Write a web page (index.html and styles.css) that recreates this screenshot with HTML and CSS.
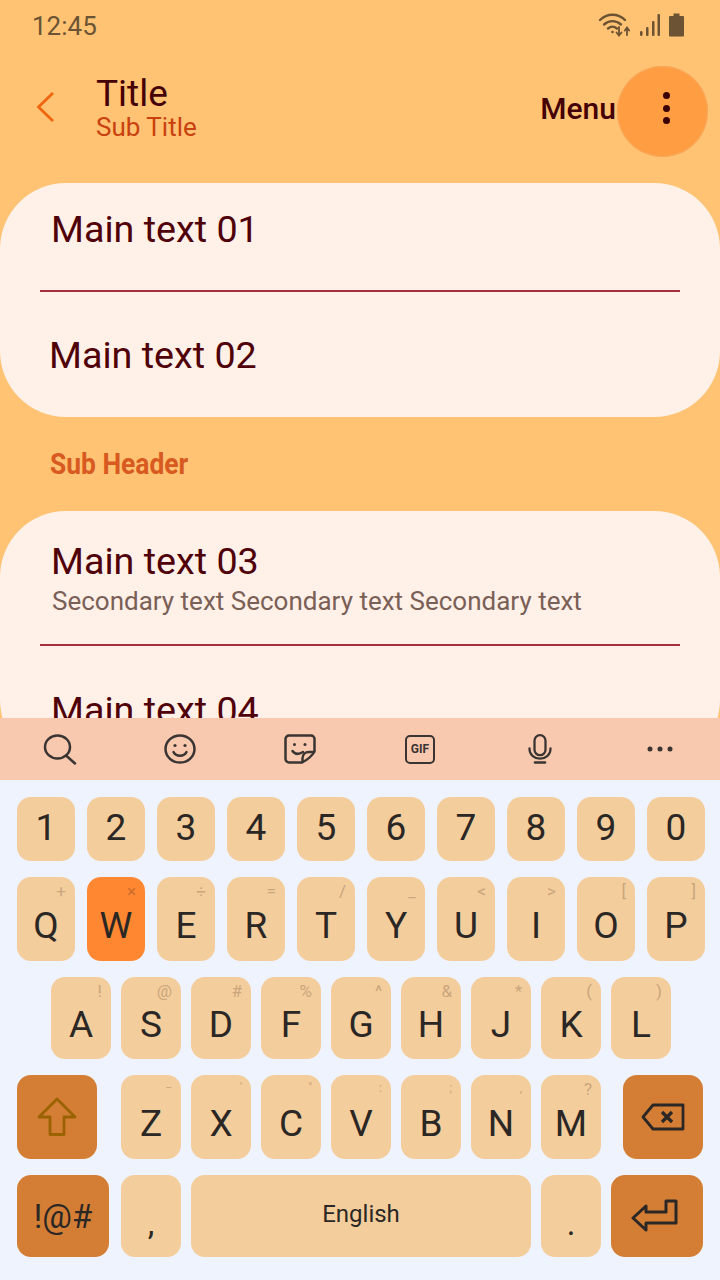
FILE: index.html
```html
<!DOCTYPE html>
<html lang="en">
<head>
  <meta charset="UTF-8">
  <title>Title</title>
  <meta name="viewport" content="width=device-width, initial-scale=1.0">
  <link rel="stylesheet" href="styles.css">
</head>
<body>
  <div class="screen">
    <div class="content">
      <div class="status-bar">
        <span class="clock">12:45</span>
        <div class="status-icons">
          <svg width="34" height="26" viewBox="0 0 34 26" fill="none" stroke="#6b5333" stroke-width="2.400" stroke-linecap="round">
            <path d="M2 8C9 1 20 1 27 8"/>
            <path d="M6 12.500C11 8 18 8 23 12.500"/>
            <path d="M10 16.500C13 14 16 14 19 16.500"/>
            <circle cx="14.500" cy="20" r="1.300" fill="#6b5333" stroke="none"/>
            <path d="M21 15V23M18.500 20.500L21 23.500L23.500 20.500" stroke-width="1.800"/>
            <path d="M29 23V16M26.800 18.500L29 15.500L31.200 18.500" stroke-width="1.800"/>
          </svg>
          <svg width="20" height="26" viewBox="0 0 20 26" fill="#6b5333">
            <rect x="0" y="19" width="2.500" height="5" rx="1.200"/>
            <rect x="6" y="15" width="2.500" height="9" rx="1"/>
            <rect x="12" y="9" width="2.500" height="15" rx="1"/>
            <rect x="17.500" y="2" width="2.500" height="22" rx="1"/>
          </svg>
          <svg width="17" height="26" viewBox="0 0 16 26" fill="#6b5333">
            <path d="M5 1.500H11V4H14.500A1 1 0 0 1 15.500 5V23.500A1 1 0 0 1 14.500 24.500H1.500A1 1 0 0 1 .5 23.500V5A1 1 0 0 1 1.500 4H5Z"/>
          </svg>
        </div>
      </div>

      <div class="app-bar">
        <svg class="back" width="20" height="32" viewBox="0 0 20 32" fill="none" stroke="#f0650f" stroke-width="2.800">
          <path d="M18 2L3.500 16L18 30"/>
        </svg>
        <div class="titles">
          <div class="title">Title</div>
          <div class="sub-title">Sub Title</div>
        </div>
        <span class="menu-label">Menu</span>
        <div class="more-btn">
          <span class="dot"></span>
          <span class="dot"></span>
          <span class="dot"></span>
        </div>
      </div>

      <div class="card">
        <div class="row row-01">
          <div class="main-text">Main text 01</div>
        </div>
        <div class="divider"></div>
        <div class="row row-02">
          <div class="main-text">Main text 02</div>
        </div>
      </div>

      <div class="sub-header"><span>Sub Header</span></div>

      <div class="card">
        <div class="row row-03">
          <div class="main-text">Main text 03</div>
          <div class="secondary-text">Secondary text Secondary text Secondary text</div>
        </div>
        <div class="divider"></div>
        <div class="row row-04">
          <div class="main-text">Main text 04</div>
        </div>
      </div>
    </div>

    <div class="toolbar">
      <svg width="34" height="31" viewBox="0 0 34 31" fill="none" stroke="#3a3433" stroke-width="2.500" stroke-linecap="round">
        <ellipse cx="14.500" cy="13" rx="12.500" ry="11.500"/>
        <path d="M23 21.500L32 29.500"/>
      </svg>
      <svg width="32" height="30" viewBox="0 0 32 30" fill="none" stroke="#3a3433" stroke-width="2.500" stroke-linecap="round">
        <ellipse cx="16" cy="15" rx="14.500" ry="13.500"/>
        <circle cx="11" cy="11.500" r="1.600" fill="#3a3433" stroke="none"/>
        <circle cx="21" cy="11.500" r="1.600" fill="#3a3433" stroke="none"/>
        <path d="M9.500 18C12 23 20 23 22.500 18"/>
      </svg>
      <svg width="32" height="30" viewBox="0 0 32 30" fill="none" stroke="#3a3433" stroke-width="2.500" stroke-linecap="round" stroke-linejoin="round">
        <path d="M18 28.500H5A3.500 3.500 0 0 1 1.500 25V5A3.500 3.500 0 0 1 5 1.500H27A3.500 3.500 0 0 1 30.500 5V17.500C28 22 23 26 18 28.500Z"/>
        <path d="M30 18H25C21 18 18.500 21 18.500 24.500V28"/>
        <path d="M8.500 17C11 20.500 15 20.500 19 18"/>
        <circle cx="10.500" cy="10.500" r="1.500" fill="#3a3433" stroke="none"/>
        <circle cx="21" cy="10.500" r="1.500" fill="#3a3433" stroke="none"/>
      </svg>
      <div class="gif-icon">GIF</div>
      <svg width="24" height="30" viewBox="0 0 24 30" fill="none" stroke="#3a3433" stroke-width="2.300" stroke-linecap="round">
        <rect x="6.500" y="1.200" width="11" height="20" rx="5.500"/>
        <path d="M1.500 14.500C1.500 28 22.500 28 22.500 14.500"/>
        <path d="M7 28.500H17" stroke-width="2.600"/>
      </svg>
      <svg width="32" height="32" viewBox="0 0 32 32" fill="#3a3433">
        <circle cx="6" cy="16" r="2.500"/>
        <circle cx="16" cy="16" r="2.500"/>
        <circle cx="26" cy="16" r="2.500"/>
      </svg>
    </div>

    <div class="keyboard">
      <div class="key-row numbers">
        <div class="key">1</div>
        <div class="key">2</div>
        <div class="key">3</div>
        <div class="key">4</div>
        <div class="key">5</div>
        <div class="key">6</div>
        <div class="key">7</div>
        <div class="key">8</div>
        <div class="key">9</div>
        <div class="key">0</div>
      </div>
      <div class="key-row qwerty">
        <div class="key letter">Q<span class="hint">+</span></div>
        <div class="key letter pressed">W<span class="hint">×</span></div>
        <div class="key letter">E<span class="hint">÷</span></div>
        <div class="key letter">R<span class="hint">=</span></div>
        <div class="key letter">T<span class="hint">/</span></div>
        <div class="key letter">Y<span class="hint">_</span></div>
        <div class="key letter">U<span class="hint">&lt;</span></div>
        <div class="key letter">I<span class="hint">&gt;</span></div>
        <div class="key letter">O<span class="hint">[</span></div>
        <div class="key letter">P<span class="hint">]</span></div>
      </div>
      <div class="key-row home">
        <div class="key letter wide">A<span class="hint">!</span></div>
        <div class="key letter wide">S<span class="hint">@</span></div>
        <div class="key letter wide">D<span class="hint">#</span></div>
        <div class="key letter wide">F<span class="hint">%</span></div>
        <div class="key letter wide">G<span class="hint">^</span></div>
        <div class="key letter wide">H<span class="hint">&amp;</span></div>
        <div class="key letter wide">J<span class="hint">*</span></div>
        <div class="key letter wide">K<span class="hint">(</span></div>
        <div class="key letter wide">L<span class="hint">)</span></div>
      </div>
      <div class="key-row bottom-letters">
        <div class="key special shift">
          <svg width="40" height="40" viewBox="0 0 40 40" fill="none" stroke="#9a6200" stroke-width="2.800" stroke-linejoin="round">
            <path d="M20 2L38 20H27V37.500H13V20H2Z"/>
          </svg>
        </div>
        <div class="key-group">
          <div class="key letter wide">Z<span class="hint tiny">−</span></div>
          <div class="key letter wide">X<span class="hint tiny">'</span></div>
          <div class="key letter wide">C<span class="hint tiny">"</span></div>
          <div class="key letter wide">V<span class="hint tiny">:</span></div>
          <div class="key letter wide">B<span class="hint tiny">;</span></div>
          <div class="key letter wide">N<span class="hint tiny">,</span></div>
          <div class="key letter wide">M<span class="hint">?</span></div>
        </div>
        <div class="key special shift">
          <svg width="44" height="28" viewBox="0 0 44 28" fill="none" stroke="#2b2725" stroke-width="2.800" stroke-linejoin="round">
            <path d="M12 2H42V26H12L2 14Z"/>
            <path d="M21 9L31 19M31 9L21 19" stroke-width="3.200"/>
          </svg>
        </div>
      </div>
      <div class="key-row last-row">
        <div class="key special symbols">!@#</div>
        <div class="key wide punct">,</div>
        <div class="key space">English</div>
        <div class="key wide punct">.</div>
        <div class="key special enter">
          <svg width="48" height="34" viewBox="0 0 48 34" fill="none" stroke="#2b2725" stroke-width="3" stroke-linejoin="round" stroke-linecap="round">
            <path d="M2 19L15 7V13H35V2H45V24H15V31Z"/>
          </svg>
        </div>
      </div>
    </div>
  </div>
</body>
</html>
```

FILE: styles.css
```css
* {
  margin: 0;
  padding: 0;
  box-sizing: border-box;
}

html, body {
  height: 100%;
  font-family: 'Roboto', sans-serif;
}

.screen {
  width: 720px;
  height: 1280px;
  display: flex;
  flex-direction: column;
  overflow: hidden;
  background-color: #FFC373;
}

.content {
  height: 718px;
  overflow: hidden;
  flex-shrink: 0;
}

/* status bar */
.status-bar {
  height: 50px;
  display: flex;
  align-items: center;
  justify-content: space-between;
  padding: 2px 35px 0 32px;
}

.clock {
  font-size: 26px;
  color: #6b5333;
}

.status-icons {
  display: flex;
  align-items: center;
  gap: 8px;
  margin-top: -3px;
}

/* app bar */
.app-bar {
  height: 133px;
  display: flex;
  align-items: center;
  padding: 0 12px 16px 35px;
}

.back {
  flex-shrink: 0;
  margin: -3px 41px 0 0;
}

.titles {
  flex: 1;
  margin-top: -1px;
}

.title {
  font-size: 37px;
  line-height: 38px;
  color: #450006;
}

.sub-title {
  font-size: 26px;
  line-height: 29px;
  color: #c8410f;
}

.menu-label {
  font-size: 30px;
  font-weight: 500;
  color: #450006;
}

.more-btn {
  width: 91px;
  height: 91px;
  border-radius: 50%;
  background-color: #FF9D42;
  box-shadow: inset 0 0 0 1px #f9a95c;
  display: flex;
  flex-direction: column;
  align-items: center;
  justify-content: center;
  gap: 5.500px;
  margin: 6px 0 0 1px;
  padding: 0 0 7px 7px;
}

.dot {
  width: 7px;
  height: 7px;
  border-radius: 50%;
  background-color: #3a0005;
}

/* list cards */
.card {
  background-color: #FFF0E8;
  border-radius: 66px;
}

.row-01 {
  height: 107px;
  padding: 25px 0 0 51px;
}

.row-02 {
  height: 125px;
  padding: 42px 0 0 49px;
}

.row-03 {
  height: 133px;
  padding: 29px 0 0 51px;
}

.row-04 {
  height: 120px;
  padding: 43px 0 0 51px;
}

.row-03 .secondary-text {
  margin-left: 1px;
}

.main-text {
  font-size: 37.700px;
  line-height: 42px;
  color: #4f0008;
}

.secondary-text {
  font-size: 26px;
  line-height: 30px;
  margin-top: 4px;
  color: #7a5f56;
}

.divider {
  height: 2px;
  margin: 0 40px;
  background-color: #a63040;
}

.sub-header {
  height: 94px;
  display: flex;
  align-items: center;
  padding: 0 0 2px 50px;
  font-size: 30px;
  font-weight: 700;
  color: #d85a20;
}

.sub-header span {
  display: inline-block;
  transform: scaleX(0.88);
  transform-origin: left center;
}

/* keyboard toolbar */
.toolbar {
  height: 62px;
  flex-shrink: 0;
  display: grid;
  grid-template-columns: repeat(6, 120px);
  align-items: center;
  justify-items: center;
  background-color: #F8C9AE;
}

.gif-icon {
  width: 30px;
  height: 29px;
  border: 2.500px solid #3a3433;
  border-radius: 5px;
  display: flex;
  align-items: center;
  justify-content: center;
  font-size: 12px;
  font-weight: 700;
  color: #3a3433;
}

/* keyboard */
.keyboard {
  flex: 1;
  display: flex;
  flex-direction: column;
  gap: 16px;
  padding-top: 17px;
  background-color: #EFF3FE;
}

.key-row {
  display: flex;
}

.numbers {
  height: 64px;
  gap: 12px;
  padding-left: 17px;
}

.numbers .key {
  padding-bottom: 4px;
}

.qwerty {
  height: 84px;
  gap: 12px;
  padding-left: 17px;
}

.home {
  height: 82px;
  gap: 10px;
  padding-left: 51px;
}

.bottom-letters {
  height: 84px;
  padding-left: 17px;
}

.last-row {
  height: 82px;
  gap: 10px;
  padding-left: 17px;
}

.key-group {
  display: flex;
  gap: 10px;
  margin: 0 22px 0 24px;
}

.key {
  position: relative;
  width: 58px;
  display: flex;
  align-items: center;
  justify-content: center;
  border-radius: 14px;
  background-color: #F4CD9C;
  font-size: 37px;
  color: #2b2725;
}

.key.letter {
  padding-top: 12px;
}

.key.wide {
  width: 60px;
}

.key.pressed {
  background-color: #FF8731;
}

.key.special {
  background-color: #D47E35;
}

.key.shift {
  width: 80px;
}

.symbols {
  width: 92px;
  margin-right: 2px;
  font-size: 33px;
}

.key.enter {
  width: 92px;
  padding-right: 4px;
}

.key.punct {
  padding-top: 14px;
  font-size: 33px;
}

.space {
  width: 340px;
  padding-bottom: 4px;
  font-size: 24px;
}

.hint {
  position: absolute;
  top: 3px;
  right: 9px;
  font-size: 17px;
  line-height: 22px;
  color: #c9a67c;
}

.pressed .hint {
  color: #c96d2c;
}

.hint.tiny {
  font-size: 12px;
  top: 2px;
}
```
